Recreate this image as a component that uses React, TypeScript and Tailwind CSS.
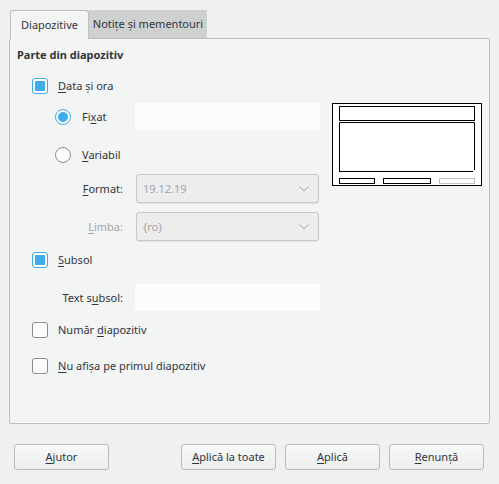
import React from "react";

const ink = "text-[#31363b]";

function Mn({ children }: { children: React.ReactNode }) {
  // keyboard mnemonic letter
  return <span className="underline underline-offset-2">{children}</span>;
}

function CheckBox({ checked }: { checked?: boolean }) {
  return (
    <span
      className={
        "flex h-4 w-4 shrink-0 items-center justify-center rounded-[3px] border bg-[#fcfcfc] " +
        (checked ? "border-[#3daee9]" : "border-[#8a8c8e]")
      }
    >
      {checked && <span className="h-[10px] w-[10px] rounded-[1px] bg-[#3daee9]" />}
    </span>
  );
}

function Radio({ checked }: { checked?: boolean }) {
  return (
    <span
      className={
        "flex h-4 w-4 shrink-0 items-center justify-center rounded-full border bg-[#fcfcfc] " +
        (checked ? "border-[#3daee9]" : "border-[#8a8c8e]")
      }
    >
      {checked && <span className="h-[10px] w-[10px] rounded-full bg-[#3daee9]" />}
    </span>
  );
}

function Combo({ value }: { value: string }) {
  return (
    <div className="ml-[13px] flex h-[29px] w-[183px] items-center justify-between rounded-[3px] border border-[#c5c7c8] bg-[#ededee] pl-[6px] pr-[9px] text-[#a3a5a6] shadow-[0_1px_0_rgba(0,0,0,0.06)]">
      <span>{value}</span>
      <svg width="10" height="6" viewBox="0 0 10 6" fill="none">
        <path d="M0.5 0.5 L5 5 L9.5 0.5" stroke="#a3a5a6" strokeWidth="1" />
      </svg>
    </div>
  );
}

function Button({ children }: { children: React.ReactNode }) {
  return (
    <button
      type="button"
      className="flex h-[26px] w-[95px] items-center justify-center rounded-[3px] border border-[#b9bbbd] bg-gradient-to-b from-[#f7f8f8] to-[#eceded] text-[#31363b]"
    >
      {children}
    </button>
  );
}

function Preview() {
  return (
    <svg width="150" height="83" viewBox="0 0 150 83" fill="none" className="block">
      <rect x="0.5" y="0.5" width="149" height="82" fill="#ffffff" stroke="#000" />
      <rect x="7.5" y="3.5" width="135" height="14" fill="#ffffff" stroke="#000" />
      <path d="M7.5 68 V19.5 H142.5 V67" stroke="#000" />
      <path d="M7 68.5 H141" stroke="#000" />
      <rect x="7.5" y="75.5" width="35" height="5" stroke="#000" />
      <rect x="51.5" y="75.5" width="47" height="5" stroke="#000" />
      <rect x="107.5" y="75.5" width="35" height="5" stroke="#c4c4c4" />
    </svg>
  );
}

export default function App() {
  return (
    <div
      className={`flex h-[484px] w-[499px] flex-col bg-[#eff0f1] pl-[9px] pt-[10px] text-[11px] leading-4 whitespace-nowrap ${ink}`}
      style={{ fontFamily: '"Noto Sans", "DejaVu Sans", sans-serif' }}
    >
      {/* tabs */}
      <div className="flex h-[29px] items-start pl-px">
        <div className="relative z-10 flex h-[29px] w-[79px] items-center justify-center rounded-t-[3px] border border-b-0 border-[#bcbebf] bg-[#f3f4f4] pb-px">
          Diapozitive
        </div>
        <div className="flex h-[28px] w-[118px] items-center justify-center bg-[#cfd0d0] pb-px">
          Notițe și mementouri
        </div>
      </div>

      {/* panel */}
      <div className="-mt-px flex h-[386px] w-[481px] flex-col rounded-[2px] border border-[#bcbebf] bg-[#f3f4f4]">
        <div className="pl-[7px] pt-[8px] font-bold">Parte din diapozitiv</div>

        <div className="mt-[9px] flex pl-[22px]">
          <div className="flex w-[288px] flex-col">
            <div className="flex h-[27px] items-center gap-[10px]">
              <CheckBox checked />
              <span>
                <Mn>D</Mn>ata și ora
              </span>
            </div>

            <div className="mt-[4px] flex h-[27px] items-center">
              <div className="flex w-[91px] items-center gap-[11px] pl-[23px]">
                <Radio checked />
                <span>
                  Fi<Mn>x</Mn>at
                </span>
              </div>
              <div className="ml-[12px] h-[27px] w-[185px] bg-[#fcfcfc]" />
            </div>

            <div className="mt-[11px] flex h-[27px] items-center gap-[11px] pl-[23px]">
              <Radio />
              <span>
                <Mn>V</Mn>ariabil
              </span>
            </div>

            <div className="mt-[6px] flex h-[29px] items-center">
              <span className="w-[91px] text-right">
                <Mn>F</Mn>ormat:
              </span>
              <Combo value="19.12.19" />
            </div>

            <div className="mt-[9px] flex h-[29px] items-center">
              <span className="w-[91px] text-right text-[#a3a5a6]">
                <Mn>L</Mn>imba:
              </span>
              <Combo value="{ro}" />
            </div>

            <div className="mt-[5px] flex h-[27px] items-center gap-[10px]">
              <CheckBox checked />
              <span>
                <Mn>S</Mn>ubsol
              </span>
            </div>

            <div className="mt-[11px] flex h-[27px] items-center">
              <span className="w-[91px] text-right">
                Text s<Mn>u</Mn>bsol:
              </span>
              <div className="ml-[12px] h-[27px] w-[185px] bg-[#fcfcfc]" />
            </div>

            <div className="mt-[5px] flex h-[27px] items-center gap-[10px]">
              <CheckBox />
              <span>
                Număr <Mn>d</Mn>iapozitiv
              </span>
            </div>

            <div className="mt-[9px] flex h-[27px] items-center gap-[10px]">
              <CheckBox />
              <span>
                <Mn>N</Mn>u afișa pe primul diapozitiv
              </span>
            </div>
          </div>

          <div className="ml-[12px] mt-[31px]">
            <Preview />
          </div>
        </div>
      </div>

      {/* buttons */}
      <div className="mt-[20px] flex items-center pl-[5px]">
        <Button>
          <span>
            <Mn>A</Mn>jutor
          </span>
        </Button>
        <div className="ml-[72px] flex gap-[9px]">
          <Button>
            <span>
              <Mn>A</Mn>plică la toate
            </span>
          </Button>
          <Button>
            <span>
              <Mn>A</Mn>plică
            </span>
          </Button>
          <Button>
            <span>
              <Mn>R</Mn>enunță
            </span>
          </Button>
        </div>
      </div>
    </div>
  );
}
